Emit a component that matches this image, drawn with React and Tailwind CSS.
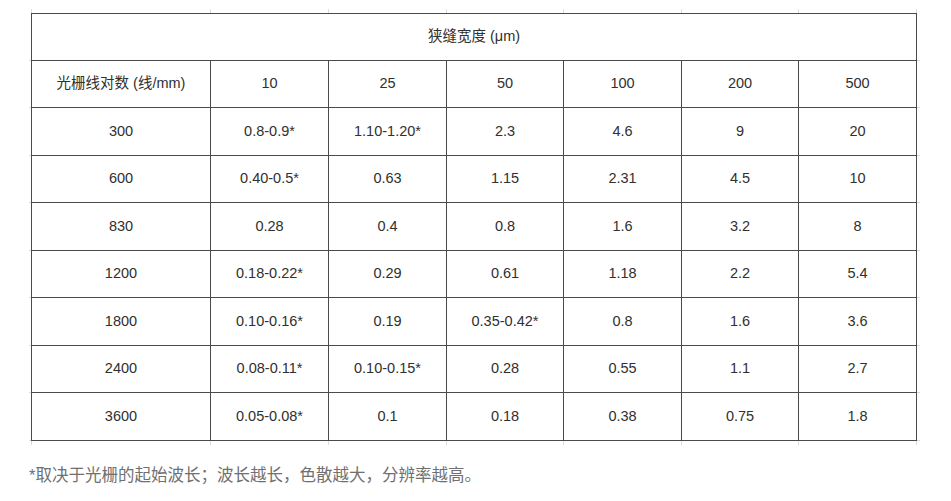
import React from "react";

const widths = [179, 118, 118, 117, 118, 117, 118];
const cols = "grid grid-cols-[3px_179px_118px_118px_117px_118px_117px_118px_3px]";

const rows = [
  { h: "h-[48px]", cells: ["300", "0.8-0.9*", "1.10-1.20*", "2.3", "4.6", "9", "20"] },
  { h: "h-[47px]", cells: ["600", "0.40-0.5*", "0.63", "1.15", "2.31", "4.5", "10"] },
  { h: "h-[48px]", cells: ["830", "0.28", "0.4", "0.8", "1.6", "3.2", "8"] },
  { h: "h-[47px]", cells: ["1200", "0.18-0.22*", "0.29", "0.61", "1.18", "2.2", "5.4"] },
  { h: "h-[48px]", cells: ["1800", "0.10-0.16*", "0.19", "0.35-0.42*", "0.8", "1.6", "3.6"] },
  { h: "h-[47px]", cells: ["2400", "0.08-0.11*", "0.10-0.15*", "0.28", "0.55", "1.1", "2.7"] },
  { h: "h-[48px]", cells: ["3600", "0.05-0.08*", "0.1", "0.18", "0.38", "0.75", "1.8"] },
];

const font = { fontFamily: '"Liberation Sans", "Noto Sans CJK SC", sans-serif' };

function Stub() {
  return <div className="border-b border-[#dcdcdc]" />;
}

function StubRow() {
  return (
    <div className={`${cols} h-[4px]`}>
      <div />
      {widths.map((w, i) => (
        <div
          key={i}
          className={`border-r border-[#dcdcdc] ${i === 0 ? "border-l -ml-px" : ""}`}
        />
      ))}
      <div />
    </div>
  );
}

function Row({ h, cells }) {
  return (
    <div className={`${cols} ${h}`}>
      <Stub />
      {cells.map((c, i) => (
        <div
          key={i}
          className={`flex items-center justify-center border-b border-r border-[#4a4a4a] text-[14.5px] ${
            i === 0 ? "border-l -ml-px" : ""
          }`}
        >
          {c}
        </div>
      ))}
      <Stub />
    </div>
  );
}

export default function App() {
  return (
    <div className="w-[951px] h-[501px] bg-white text-[#303030]" style={font}>
      <div className="pt-[9px] pl-[29px]">
        <StubRow />
        <div className="grid grid-cols-[3px_885px_3px] h-[48px]">
          <Stub />
          <div className="-ml-px flex items-center justify-center border border-[#4a4a4a] text-[14.5px]">
            狭缝宽度 (μm)
          </div>
          <Stub />
        </div>
        <Row h="h-[47px]" cells={["光栅线对数 (线/mm)", "10", "25", "50", "100", "200", "500"]} />
        {rows.map((r, i) => (
          <Row key={i} h={r.h} cells={r.cells} />
        ))}
        <StubRow />
        <p className="mt-[22px] text-[16.5px] text-[#707070] leading-none">
          *取决于光栅的起始波长；波长越长，色散越大，分辨率越高。
        </p>
      </div>
    </div>
  );
}
